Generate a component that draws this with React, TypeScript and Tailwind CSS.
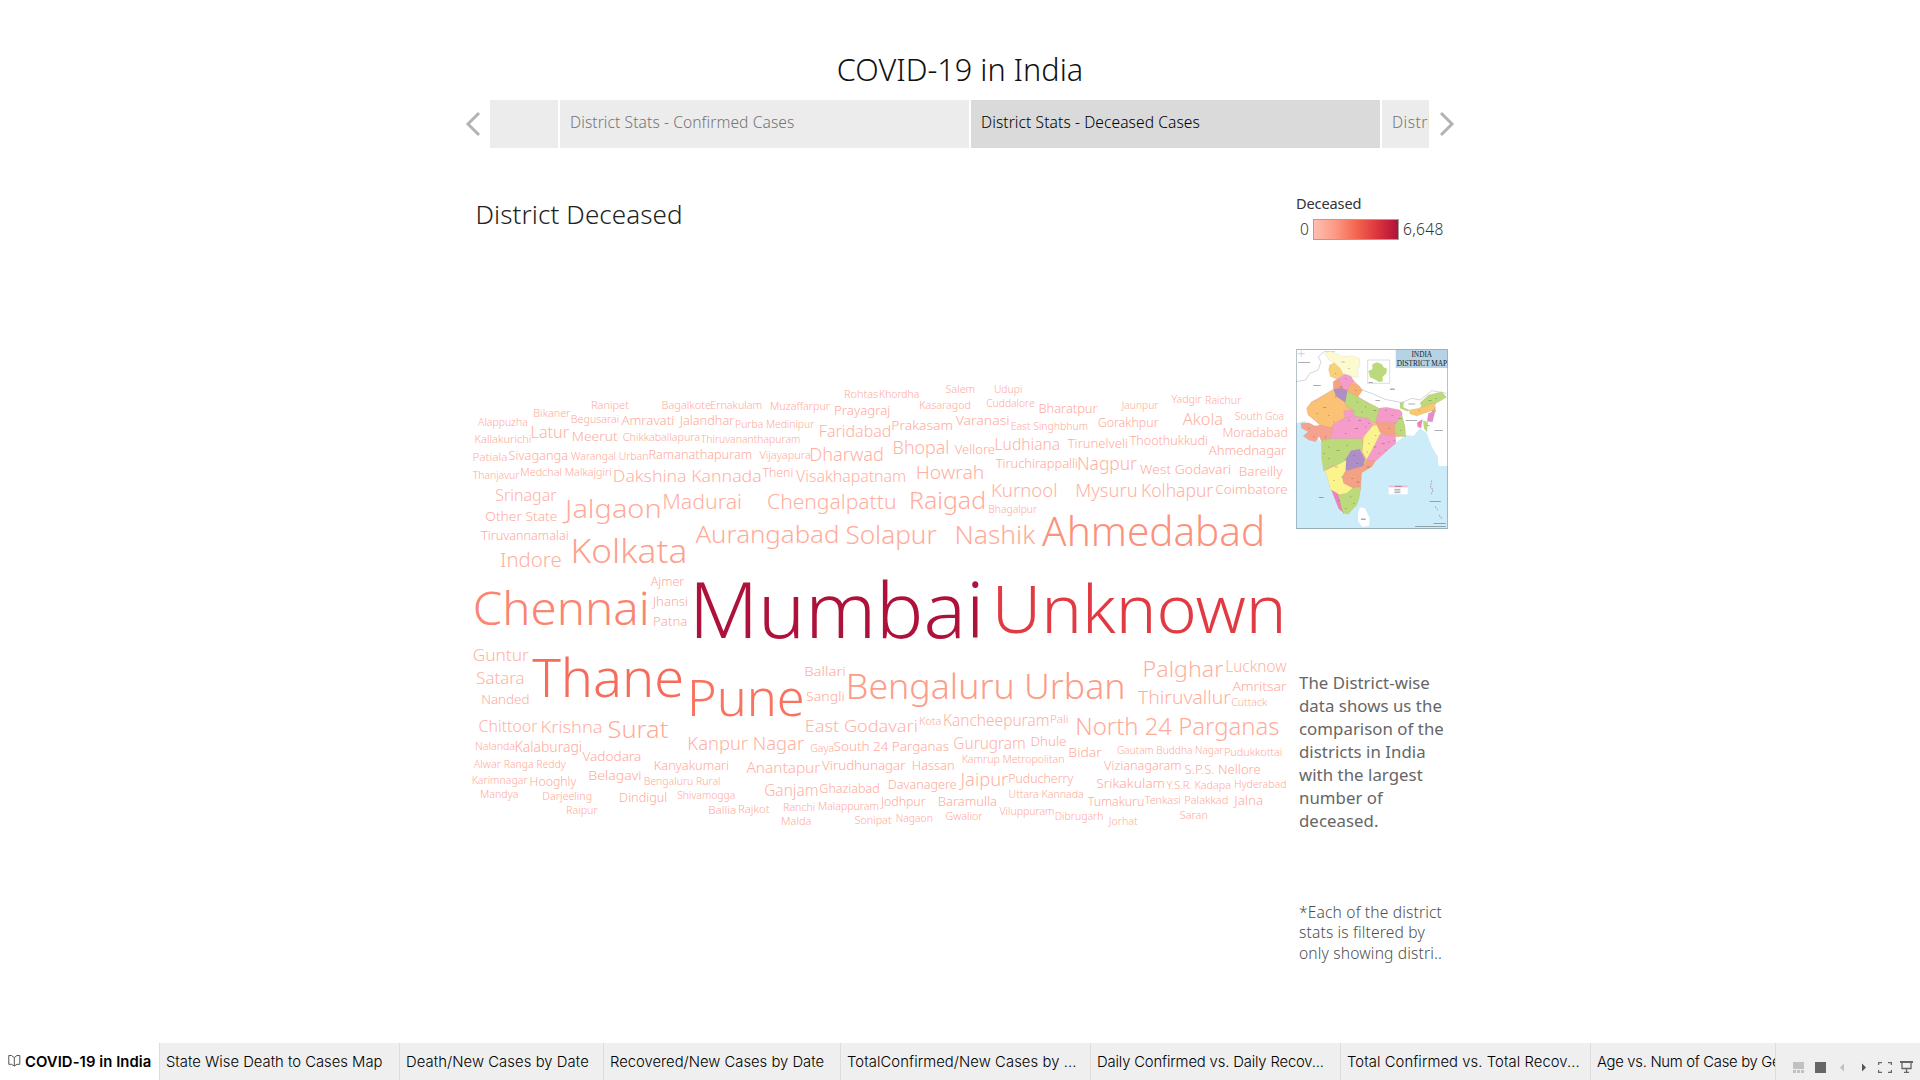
import React from "react";

const FONT = '"Noto Sans", sans-serif';

// [name, left edge, right edge, baseline, font size]
type Word = [string, number, number, number, number];

const words: Word[] = [
  ["Ranipet", 591.7, 628.3, 408.3, 10],
  ["Bikaner", 534, 570, 416.3, 10],
  ["Begusarai", 571.5, 618.3, 423, 10],
  ["Amravati", 621, 673, 425, 12.5],
  ["Jalandhar", 678, 733.7, 425, 12.5],
  ["Purba Medinipur", 735.7, 814, 427.3, 10],
  ["Alappuzha", 477.7, 526.7, 426, 10],
  ["Latur", 531.7, 568.7, 438, 15.5],
  ["Meerut", 572.7, 617.3, 441, 13.5],
  ["Chikkaballapura", 623, 699, 441, 10],
  ["Thiruvananthapuram", 700.3, 799.3, 443, 10],
  ["Kallakurichi", 475.3, 530.3, 443, 10],
  ["Patiala", 473.3, 506.3, 460.7, 10],
  ["Sivaganga", 508.7, 566.7, 460, 12.5],
  ["Warangal Urban", 570.7, 647.3, 460, 10],
  ["Ramanathapuram", 649.3, 750.7, 459, 12.5],
  ["Thanjavur", 472.3, 519, 479, 10],
  ["Medchal Malkajgiri", 521, 610.7, 476, 10],
  ["Dakshina Kannada", 614, 760, 482, 16.8],
  ["Srinagar", 495.7, 556, 500.3, 15.5],
  ["Jalgaon", 562, 659, 517.3, 26.5],
  ["Madurai", 663.7, 740.3, 509, 19.5],
  ["Other State", 485.7, 556.3, 521, 13],
  ["Tiruvannamalai", 480.7, 567.3, 540, 12.5],
  ["Aurangabad", 695, 837, 542.7, 24.5],
  ["Kolkata", 573.7, 684, 562.3, 33],
  ["Indore", 500.7, 560.3, 567, 20],
  ["Ajmer", 650.3, 683.7, 586, 12.5],
  ["Bagalkote", 662.3, 710, 408.3, 10],
  ["Ernakulam", 711, 761, 408.3, 10],
  ["Rohtas", 844.7, 877.3, 398, 10],
  ["Khordha", 879.7, 918.3, 398, 10],
  ["Salem", 945.7, 974, 393, 10],
  ["Udupi", 994.3, 1021.3, 393, 10],
  ["Muzaffarpur", 770.7, 829.7, 410, 10],
  ["Prayagraj", 835, 889, 415, 12.5],
  ["Kasaragod", 920, 969.7, 408.3, 10],
  ["Cuddalore", 986.3, 1033.7, 407, 10],
  ["Faridabad", 820, 889.7, 437, 15.5],
  ["Prakasam", 892.3, 951.7, 429.3, 13],
  ["Varanasi", 955.3, 1008.3, 425, 13],
  ["East Singhbhum", 1011.3, 1087, 430, 10],
  ["Vijayapura", 759, 809.7, 459, 10],
  ["Dharwad", 810.7, 882, 461, 17.5],
  ["Bhopal", 894, 947.7, 453.3, 17.5],
  ["Vellore", 954.3, 994, 453.3, 11.8],
  ["Ludhiana", 995.7, 1058.7, 450, 15.5],
  ["Theni", 762, 792, 477, 12.5],
  ["Visakhapatnam", 795.7, 904.7, 482, 15.5],
  ["Howrah", 917.3, 982.3, 478.3, 18.5],
  ["Tiruchirappalli", 995.3, 1076.7, 468, 12.5],
  ["Chengalpattu", 767.7, 894.3, 509, 19.5],
  ["Raigad", 911, 983.7, 509, 23.5],
  ["Kurnool", 992.3, 1055.7, 497, 18],
  ["Bhagalpur", 989, 1036.7, 513, 10],
  ["Solapur", 846.3, 936, 543.7, 25],
  ["Nashik", 956.7, 1035, 543.7, 25],
  ["Bharatpur", 1039.3, 1097, 413, 12.5],
  ["Jaunpur", 1120.3, 1158, 409, 10],
  ["Yadgir", 1171, 1201.3, 403, 10],
  ["Raichur", 1205.7, 1241, 404, 10],
  ["Gorakhpur", 1098, 1158, 427, 12.5],
  ["Akola", 1182.3, 1221.7, 425, 16],
  ["South Goa", 1235, 1283, 420, 10],
  ["Moradabad", 1223.3, 1286.7, 436.3, 12.8],
  ["Tirunelveli", 1067.3, 1126.7, 447.3, 12.5],
  ["Thoothukkudi", 1129.3, 1206.7, 445, 12.5],
  ["Ahmednagar", 1208.3, 1285.7, 455, 13],
  ["Nagpur", 1078.3, 1136.3, 470, 17.5],
  ["West Godavari", 1140, 1230, 474, 13],
  ["Bareilly", 1239.7, 1282.3, 476, 12.5],
  ["Mysuru", 1076.7, 1135.7, 497, 17.5],
  ["Kolhapur", 1142.3, 1212.7, 497, 17.5],
  ["Coimbatore", 1215.7, 1286.7, 494, 13],
  ["Ahmedabad", 1041.7, 1261.3, 546, 39.5],
  ["Jhansi", 651, 686.7, 606, 12.5],
  ["Patna", 654, 686, 626, 12.5],
  ["Chennai", 475.3, 646, 625, 45],
  ["Guntur", 473.3, 528.3, 661, 17],
  ["Satara", 476.7, 523, 684, 16],
  ["Nanded", 482, 528, 704, 13.5],
  ["Thane", 532, 681, 696.7, 53],
  ["Pune", 691.7, 801.7, 715.7, 50],
  ["Chittoor", 479, 537, 731.3, 15.5],
  ["Krishna", 541.7, 600.7, 733, 17],
  ["Surat", 608.3, 667.3, 738, 23],
  ["Nalanda", 475.7, 514, 750, 10],
  ["Kalaburagi", 515.3, 580.7, 752, 14],
  ["Vadodara", 582, 640, 761, 13.5],
  ["Kanpur Nagar", 688.7, 803.7, 750, 18],
  ["Alwar", 473.3, 500.7, 768, 10],
  ["Ranga Reddy", 504.3, 565.3, 768, 10],
  ["Kanyakumari", 654.7, 727.7, 770, 12.5],
  ["Karimnagar", 472.3, 527.3, 783.7, 10],
  ["Hooghly", 530.3, 576, 786, 12.5],
  ["Belagavi", 589.3, 640.3, 780, 13.2],
  ["Bengaluru Rural", 644.3, 719.3, 784.7, 10],
  ["Mandya", 480.7, 517.3, 798, 10],
  ["Darjeeling", 543, 591, 800, 10],
  ["Dindigul", 620, 666, 802, 12.5],
  ["Shivamogga", 677.3, 734.3, 799, 10],
  ["Raipur", 566.7, 597.3, 814, 10],
  ["Ballia", 709, 735, 814, 10],
  ["Rajkot", 738.7, 769, 812.7, 10],
  ["Mumbai", 696, 978, 637.7, 77.5],
  ["Unknown", 996.7, 1280.7, 632.7, 66.5],
  ["Ballari", 805.3, 844.3, 676, 12.5],
  ["Sangli", 806.3, 843.3, 701, 12.5],
  ["Bengaluru Urban", 849, 1122.3, 698.7, 35],
  ["East Godavari", 806, 916.3, 732, 16.5],
  ["Kota", 919.7, 940.3, 725, 10],
  ["Kancheepuram", 944, 1048, 726, 15.5],
  ["Gaya", 810.3, 833, 752, 10],
  ["South 24 Parganas", 833.7, 948, 751, 13.5],
  ["Gurugram", 953.7, 1024.3, 748.3, 15.5],
  ["Anantapur", 746, 820, 772.7, 15.2],
  ["Virudhunagar", 821.7, 905, 770, 13.5],
  ["Hassan", 912.7, 953.3, 770, 12.5],
  ["Kamrup Metropolitan", 962.3, 1063.3, 763, 10],
  ["Ganjam", 764.7, 817, 795.3, 16.5],
  ["Ghaziabad", 819.7, 878.3, 793, 12.5],
  ["Davanagere", 888.7, 955.7, 789, 12.5],
  ["Jaipur", 958.3, 1007.7, 786, 17.5],
  ["Puducherry", 1009, 1073, 783, 12.5],
  ["Uttara Kannada", 1009, 1082.7, 798, 10],
  ["Jodhpur", 879.3, 925, 806, 12.5],
  ["Baramulla", 938.7, 995.7, 806, 12.5],
  ["Ranchi", 783.7, 814.3, 811, 10],
  ["Malappuram", 818.7, 877.7, 810, 10],
  ["Malda", 781.7, 810.3, 825, 10],
  ["Sonipat", 854.7, 891, 824, 10],
  ["Nagaon", 896.3, 931.7, 822, 10],
  ["Gwalior", 945.7, 982.3, 820, 10],
  ["Viluppuram", 999, 1053.3, 815, 10],
  ["Palghar", 1144.3, 1222.7, 677, 22],
  ["Lucknow", 1226.3, 1286, 672, 15.5],
  ["Amritsar", 1232, 1286, 691, 13],
  ["Thiruvallur", 1137.7, 1230.3, 704, 19],
  ["Cuttack", 1231.3, 1267, 706, 10],
  ["Pali", 1050.7, 1067.3, 723, 10],
  ["North 24 Parganas", 1077.3, 1278, 734.7, 23],
  ["Dhule", 1031.3, 1065.3, 746, 13.5],
  ["Bidar", 1069.3, 1101.3, 757, 13.2],
  ["Gautam Buddha Nagar", 1117, 1223, 753.3, 10],
  ["Pudukkottai", 1224.7, 1281.3, 756, 10],
  ["Vizianagaram", 1103.7, 1180.3, 770, 12.5],
  ["S.P.S. Nellore", 1184.7, 1259.7, 774, 13],
  ["Srikakulam", 1096.3, 1163.7, 788, 13],
  ["Y.S.R. Kadapa", 1166, 1230, 788.7, 10],
  ["Hyderabad", 1234.7, 1285.3, 788, 10],
  ["Tumakuru", 1087.3, 1143, 806, 12.5],
  ["Tenkasi", 1144.3, 1179.7, 804, 10],
  ["Palakkad", 1185, 1227, 804, 10],
  ["Jalna", 1232.7, 1261.7, 805, 13],
  ["Dibrugarh", 1055.3, 1102.3, 820, 10],
  ["Jorhat", 1107.3, 1137, 825, 10],
  ["Saran", 1180, 1206.7, 819, 10],
];

const hues: Record<string, string> = {
  Mumbai: "#ae123a",
  Unknown: "#e23a43",
  Thane: "#f66b5a",
  Pune: "#f97360",
  Chennai: "#fc8470",
};

function hueFor(name: string, size: number) {
  if (hues[name]) return hues[name];
  if (size > 38) return "#fd927c";
  if (size > 34) return "#fe9c88";
  if (size > 30) return "#fea08e";
  if (size > 22) return "#ffab9a";
  if (size > 18) return "#ffafa0";
  if (size > 14) return "#ffb1a3";
  return "#ffaa9b";
}

function WordCloud() {
  const ctx = document.createElement("canvas").getContext("2d")!;
  return (
    <svg width="835" height="450" viewBox="460 380 835 450" fontFamily={FONT} fontWeight="300" className="block">
      {words.map(([name, x1, x2, y, size]) => {
        ctx.font = `300 ${size * 4}px ${FONT}`;
        const m = ctx.measureText(name);
        const left = -m.actualBoundingBoxLeft / 4;
        const ink = (m.actualBoundingBoxRight + m.actualBoundingBoxLeft) / 4;
        const k = (x2 - x1) / ink;
        return (
          <text
            key={name}
            fontSize={size}
            fill={hueFor(name, size)}
            x={x1 - left * k + 0.4}
            y={y + 0.3}
            textLength={(m.width / 4) * k}
            lengthAdjust="spacingAndGlyphs"
          >
            {name}
          </text>
        );
      })}
    </svg>
  );
}

function IndiaMap() {
  const dots: [number, number][] = [
    [115, 682], [150, 650], [95, 700], [130, 705], [170, 545], [190, 565], [150, 580], [180, 595], [165, 620], [210, 630],
    [215, 665], [240, 680], [265, 690], [230, 695], [300, 690], [320, 705], [340, 715], [310, 745], [345, 750], [180, 760],
    [210, 745], [240, 740], [270, 765], [250, 790], [290, 790], [310, 785], [280, 820], [130, 800], [155, 810], [185, 795],
    [205, 825], [215, 850], [150, 860], [170, 890], [145, 900], [200, 895], [215, 905], [195, 950], [205, 970], [180, 985],
    [245, 860], [85, 770], [70, 745], [120, 770], [430, 660], [450, 655], [400, 690], [440, 690], [425, 735], [160, 960],
    [145, 725], [190, 720], [220, 720], [250, 730], [300, 810], [325, 780], [265, 800], [245, 815], [130, 835], [115, 820],
  ];
  return (
    <svg width="152" height="180" viewBox="33.5 507 455 540" preserveAspectRatio="none" className="block" strokeLinejoin="round">
      <rect x="33" y="507" width="456" height="541" fill="#fff" />
      <path d="M33 730 L60 722 L110 790 L130 900 L170 1000 L215 975 L235 860 L330 790 L362 765 L385 768 L405 745 L425 760 L440 800 L458 830 L460 858 L489 858 L489 1048 L33 1048Z" fill="#cdecf9" />
      <path d="M225 982 L240 985 L254 1015 L252 1038 L232 1041 L220 1025 L219 1000Z" fill="#fff" />
      <path d="M34 605 L62 600 L75 580 L100 570 L108 545 L100 530 L120 514 L150 515" fill="none" stroke="#a9a9c4" strokeWidth="1.5" />
      <path d="M232 630 L260 640 L300 658 L350 668 L380 655 L405 660 L440 632 L484 640" fill="none" stroke="#a9a9c4" strokeWidth="1.5" />
      <path d="M110 782 L103 768 L130 740 L105 735 L70 705 L66 685 L80 665 L125 640 L146 628 L146 605 L160 596 L190 585 L222 617 L231 632 L220 650 L285 688 L345 690 L350 705 L360 740 L360 768 L332 772 L332 790 L275 840 L260 860 L230 878 L228 925 L215 975 L175 1000 L140 930 L122 872Z" fill="#f8b69c" />
      <g stroke="#9c8f78" strokeOpacity=".4" strokeWidth="1">
        <path d="M121 520 L135 513 L155 522 L172 530 L200 527 L222 535 L225 550 L218 575 L220 592 L205 590 L190 585 L175 583 L165 565 L148 548 L132 540Z" fill="#fcfad0" />
        <path d="M134 555 L148 548 L165 565 L175 583 L158 598 L137 590 L131 570Z" fill="#f7d078" />
        <path d="M158 597 L178 582 L200 590 L206 605 L192 618 L188 632 L168 625Z" fill="#f59ccb" />
        <path d="M145 605 L158 596 L170 612 L172 628 L146 630Z" fill="#f5a183" />
        <path d="M192 618 L205 611 L222 617 L233 630 L218 650 L200 642 L186 634Z" fill="#f9b072" />
        <path d="M146 628 L168 625 L186 630 L186 650 L182 668 L165 660 L150 648Z" fill="#ae8ec6" />
        <path d="M65 685 L80 665 L100 660 L125 640 L146 628 L153 648 L182 668 L187 685 L208 692 L202 710 L178 714 L160 724 L148 744 L128 748 L105 735 L90 720 L70 705Z" fill="#fbc275" />
        <path d="M187 634 L215 648 L240 665 L270 678 L287 688 L285 712 L272 728 L240 718 L208 710 L204 690 L180 672Z" fill="#bcd97b" />
        <path d="M284 684 L305 682 L345 690 L352 700 L340 730 L310 730 L272 724Z" fill="#f59ac8" />
        <path d="M176 692 L206 690 L208 700 L198 716 L180 716Z" fill="#f59ccb" />
        <path d="M143 735 L165 720 L205 708 L250 715 L266 742 L250 762 L225 777 L180 778 L132 776 L136 756Z" fill="#f59ccb" />
        <path d="M48 730 L72 728 L90 738 L108 735 L145 744 L136 775 L115 797 L103 768 L92 785 L72 780 L55 768 L70 755 L50 745Z" fill="#f5a28e" />
        <path d="M110 782 L135 776 L230 776 L236 808 L205 812 L185 838 L170 850 L130 862 L116 874 L110 830Z" fill="#bcd97b" />
        <path d="M262 738 L284 733 L288 762 L272 790 L260 822 L246 840 L232 815 L236 770Z" fill="#fbf48d" />
        <path d="M272 726 L310 728 L340 728 L347 748 L325 767 L305 767 L285 757Z" fill="#f5a183" />
        <path d="M328 737 L350 703 L360 740 L362 770 L340 768 L330 757Z" fill="#bcd97b" />
        <path d="M285 762 L330 768 L332 790 L310 808 L275 840 L250 852 L246 836 L268 798Z" fill="#f59ccb" />
        <path d="M182 838 L198 812 L224 808 L240 838 L234 862 L200 870 L180 872Z" fill="#ae8ec6" />
        <path d="M172 880 L200 868 L235 858 L246 842 L270 842 L260 860 L230 878 L226 922 L205 924 L173 908Z" fill="#f5a183" />
        <path d="M120 872 L170 848 L184 840 L182 872 L172 890 L176 910 L205 925 L185 942 L155 947 L138 932 L128 895Z" fill="#fbf48d" />
        <path d="M140 930 L160 942 L172 965 L176 1000 L162 987 L150 957Z" fill="#f07fbf" />
        <path d="M160 945 L185 940 L205 923 L228 920 L222 955 L215 975 L190 1002 L174 1000Z" fill="#bcd97b" />
        <path d="M345 668 L356 666 L354 682 L372 690 L368 694 L345 685Z" fill="#bcd97b" />
        <path d="M372 690 L400 685 L430 670 L457 663 L440 692 L412 702 L395 708 L375 702Z" fill="#f7c86e" />
        <path d="M405 668 L430 645 L470 635 L484 652 L460 666 L430 674 L410 682Z" fill="#bcd97b" />
        <path d="M430 700 L450 694 L442 726 L426 724Z" fill="#e58ccc" />
        <path d="M396 728 L412 718 L408 744 L398 740Z" fill="#f07fbf" />
        <path d="M414 722 L428 726 L425 756 L417 745Z" fill="#bcd97b" />
        <path d="M450 678 L438 698 L452 696Z" fill="#f5a183" />
      </g>
      {dots.map(([x, y], i) => (
        <rect key={i} x={x} y={y} width={i % 4 === 0 ? 9 : 4} height="2" fill="#4a4030" fillOpacity=".5" />
      ))}
      <rect x="248" y="540" width="66" height="70" fill="#fff" stroke="#bbb" strokeWidth="1.5" />
      <path d="M250 573 L262 568 L262 553 L275 547 L290 552 L296 562 L306 566 L304 580 L292 592 L294 604 L282 606 L268 598 L255 592Z" fill="#bcd97b" />
      <path d="M38 521 H60 M49 512 V531" stroke="#aaa" strokeWidth="1.5" />
      <g fill="#333" fillOpacity=".6">
        <rect x="40" y="546" width="36" height="2" />
        <rect x="85" y="615" width="23" height="2" />
        <rect x="251" y="606" width="13" height="2" />
        <rect x="315" y="626" width="14" height="3" />
        <rect x="271" y="661" width="14" height="2" />
        <rect x="370" y="671" width="20" height="2" />
        <rect x="362" y="720" width="34" height="2" />
        <rect x="448" y="750" width="25" height="2" />
        <rect x="228" y="1016" width="14" height="3" />
        <rect x="102" y="952" width="14" height="2" />
        <rect x="433" y="964" width="34" height="2" />
        <rect x="445" y="1029" width="37" height="2" />
        <rect x="390" y="1038" width="92" height="2" />
      </g>
      <path d="M440 902 L436 920 L444 930 L437 945 M450 980 L458 990 M462 1005 L470 1016" stroke="#a99cc4" strokeWidth="3" strokeDasharray="5 3" fill="none" />
      <rect x="311" y="916" width="57" height="27" fill="#fff" />
      <rect x="311" y="916" width="57" height="6" fill="#f5b6cf" />
      <path d="M330 919 H350 M328 928 H346 M328 933 H346 M328 938 H346" stroke="#555" strokeWidth="1.5" />
      <rect x="332" y="509" width="156" height="55" fill="#b5d3e5" />
      <g fontFamily='"Liberation Serif", serif' fontWeight="400" fontSize="22" fill="#222">
        <text x="379" y="530" textLength="62" lengthAdjust="spacingAndGlyphs">INDIA</text>
        <text x="335" y="557" textLength="151" lengthAdjust="spacingAndGlyphs">DISTRICT MAP</text>
      </g>
      <rect x="34.5" y="508.5" width="453" height="537" fill="none" stroke="#7d9098" strokeWidth="2" />
    </svg>
  );
}

function Chevron({ flip }: { flip?: boolean }) {
  return (
    <svg width="17" height="26" viewBox="0 0 17 26" fill="none" stroke="#b3b3b3" strokeWidth="3">
      <path d={flip ? "M2 2 L13 13 L2 24" : "M15 2 L4 13 L15 24"} />
    </svg>
  );
}

function StoryNav() {
  return (
    <div className="flex h-12 items-center">
      <div className="flex w-[30px] items-center pb-px pl-[4px]">
        <Chevron />
      </div>
      <div className="flex h-12 w-[939px] gap-[2px] overflow-hidden whitespace-nowrap text-[15.6px] leading-[44px] tracking-[0.005em] text-[#757575]">
        <div className="w-[68px] shrink-0 bg-[#ececec]" />
        <div className="w-[409px] shrink-0 bg-[#ececec] pl-2.5">District Stats - Confirmed Cases</div>
        <div className="w-[409px] shrink-0 bg-[#dadada] pl-2.5 text-black">District Stats - Deceased Cases</div>
        <div className="w-[409px] shrink-0 bg-[#ececec] pl-2.5 tracking-[0.03em]">District Stats - Recovered Cases</div>
      </div>
      <div className="flex w-[31px] items-center pb-px pl-[10px]">
        <Chevron flip />
      </div>
    </div>
  );
}

function Sidebar() {
  return (
    <div className="flex w-[165px] flex-col pl-px">
      <div className="mt-[45px] h-[25px] text-[14.6px] font-normal leading-5 tracking-[-0.01em] text-[#333]">Deceased</div>
      <div className="flex h-[22px] items-center pl-1 text-[15.6px] leading-[21px] text-[#333]">
        <span className="w-[13px]">0</span>
        <div className="h-[21px] w-[86px] border border-[#a3a39b] bg-[linear-gradient(90deg,#ffbeb2,#fc9a85_25%,#f5664f_50%,#d9303d_78%,#ae123a)]" />
        <span className="ml-1 tracking-[0.02em]">6,648</span>
      </div>
      <div className="mt-[109px]">
        <IndiaMap />
      </div>
      <p className="mt-[142px] h-[230px] pl-[3px] text-[16.8px] font-normal leading-[23px] tracking-[0.003em] text-[#666]">
        The District-wise
        <br />
        data shows us the
        <br />
        comparison of the
        <br />
        districts in India
        <br />
        with the largest
        <br />
        number of
        <br />
        deceased.
      </p>
      <p className="mt-px pl-[3px] text-[15.6px] leading-[20.4px] tracking-[0.01em] text-[#505050]">
        *Each of the district
        <br />
        stats is filtered by
        <br />
        only showing distri..
      </p>
    </div>
  );
}

function BottomBar() {
  return (
    <div className="flex h-[37px] overflow-hidden whitespace-nowrap bg-[#efefef] font-[Inter,sans-serif] text-[14.8px] font-light leading-[38px] tracking-[0] text-black">
      <div className="flex w-[159px] shrink-0 items-center bg-white pl-2">
        <svg width="13" height="13" viewBox="0 0 13 13" fill="none" stroke="#555" className="mb-0.5">
          <path d="M.8 1.5 H3.5 L6.3 3.6 L9 1.5 H11.8 V10.3 H9 L6.3 12 L3.5 10.3 H.8Z M6.3 3.6 V12" />
        </svg>
        <span className="ml-1 leading-[36px] font-semibold tracking-[0.005em]">COVID-19 in India</span>
      </div>
      <div className="w-[240px] shrink-0 border-l border-[#dcdcdc] pl-1.5">State Wise Death to Cases Map</div>
      <div className="w-[204px] shrink-0 border-l border-[#dcdcdc] pl-1.5 tracking-[0.005em]">Death/New Cases by Date</div>
      <div className="w-[237px] shrink-0 border-l border-[#dcdcdc] pl-1.5">Recovered/New Cases by Date</div>
      <div className="w-[250px] shrink-0 border-l border-[#dcdcdc] pl-1.5 tracking-[0.005em]">TotalConfirmed/New Cases by ...</div>
      <div className="w-[250px] shrink-0 border-l border-[#dcdcdc] pl-1.5 tracking-[-0.01em]">Daily Confirmed vs. Daily Recov...</div>
      <div className="w-[250px] shrink-0 border-l border-[#dcdcdc] pl-1.5 tracking-[0.005em]">Total Confirmed vs. Total Recov...</div>
      <div className="w-[185px] shrink-0 overflow-hidden border-l border-[#dcdcdc] pl-1.5 tracking-[-0.02em]">Age vs. Num of Case by Gender</div>
      <div className="flex flex-1 items-start border-l border-[#dcdcdc] pl-[17px] pt-[18px]">
        <svg width="11" height="12" viewBox="0 0 11 12" fill="#c1c1c1">
          <path d="M0 1h11v7H0z M0 9h3v3H0z M4 9h3v3H4z M8 9h3v3H8z" />
        </svg>
        <svg width="11" height="12" viewBox="0 0 11 12" fill="#666" className="ml-[11px]">
          <path d="M0 1h11v11H0z" />
        </svg>
        <svg width="4" height="12" viewBox="0 0 4 12" fill="#c1c1c1" className="ml-[14px]">
          <path d="M4 2.5v8L0 6.5z" />
        </svg>
        <svg width="4" height="12" viewBox="0 0 4 12" fill="#555" className="ml-[18px]">
          <path d="M0 2.5v8l4-4z" />
        </svg>
        <svg width="14" height="12" viewBox="0 0 14 12" fill="none" stroke="#666" strokeWidth="1.2" className="ml-3">
          <path d="M.6 4V1.6H4 M10 1.6h3.4V4 M13.4 9v2.4H10 M4 11.4H.6V9" />
        </svg>
        <svg width="13" height="12" viewBox="0 0 13 12" fill="none" stroke="#666" className="ml-2">
          <path d="M0 1h13" strokeWidth="2" />
          <path d="M2 2v5.5h9V2 M6.5 7.5V11 M4 11.3h5" strokeWidth="1.3" />
        </svg>
      </div>
    </div>
  );
}

export default function App() {
  return (
    <div className="flex h-[1080px] w-[1920px] flex-col overflow-hidden bg-white font-['Noto_Sans',sans-serif] font-light">
      <main className="mx-auto flex w-[1000px] flex-1 flex-col">
        <h1 className="mt-[49px] h-[51px] text-center text-[30.6px] leading-10 text-[#111]">COVID-19 in India</h1>
        <StoryNav />
        <div className="flex">
          <div className="w-[835px]">
            <h2 className="mt-[46px] h-[186px] pl-[15.5px] text-[26px] leading-10 tracking-[0.004em] text-[#222]">District Deceased</h2>
            <WordCloud />
          </div>
          <Sidebar />
        </div>
      </main>
      <BottomBar />
    </div>
  );
}
